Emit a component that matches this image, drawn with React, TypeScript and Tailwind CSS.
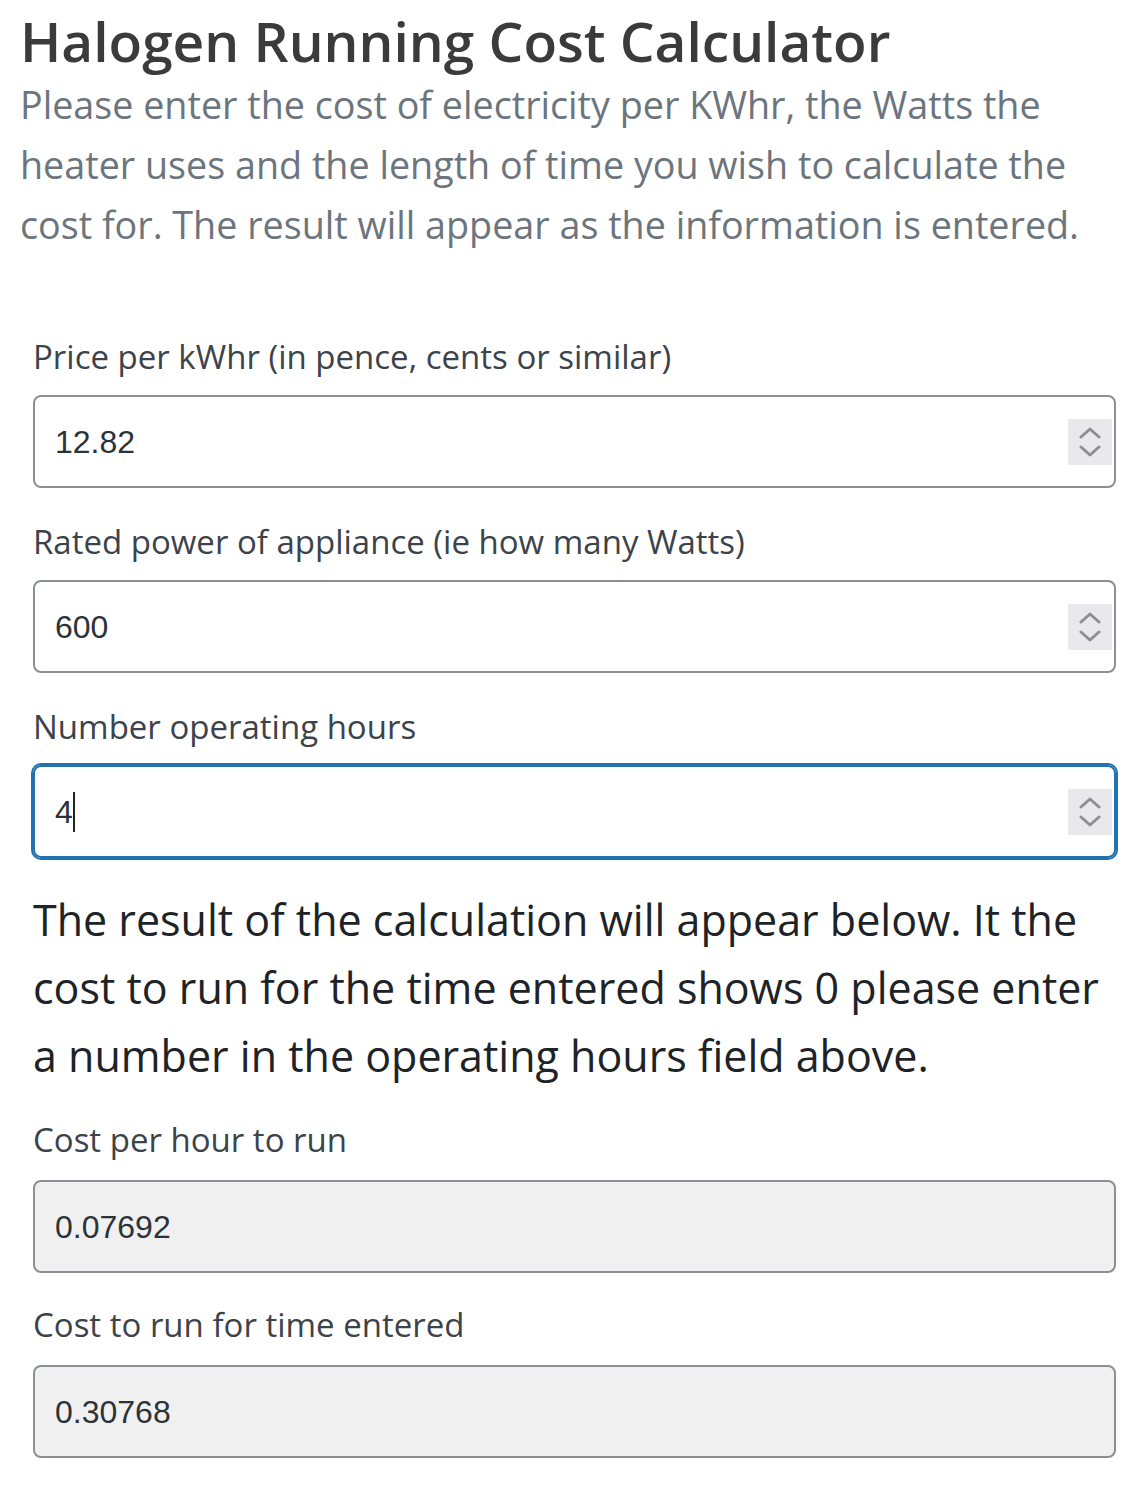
import { useState } from "react";

const fieldShell =
  "flex h-[93px] items-center rounded-[8px] border-2 border-[#8c8f94] pl-[20px] pr-[2px]";

const Spinner = () => (
  <div className="flex h-[46px] w-[44px] shrink-0 items-center justify-center bg-[#e9e9ed]">
    <svg width="22" height="32" viewBox="0 0 22 32" fill="none">
      <polyline
        points="2,11 11,3 20,11"
        stroke="#8e8e93"
        strokeWidth="3"
        strokeLinecap="round"
        strokeLinejoin="round"
      />
      <polyline
        points="2,21 11,29 20,21"
        stroke="#8e8e93"
        strokeWidth="3"
        strokeLinecap="round"
        strokeLinejoin="round"
      />
    </svg>
  </div>
);

const toNum = (v: string) => {
  const n = parseFloat(v);
  return isNaN(n) ? 0 : n;
};

const tidy = (n: number) => parseFloat(n.toFixed(6)).toString();

const App = () => {
  const [price, setPrice] = useState("12.82");
  const [watts, setWatts] = useState("600");
  const [hours, setHours] = useState("4");

  const perHour = (toNum(price) * toNum(watts)) / 100000;
  const total = perHour * toNum(hours);

  return (
    <div className="min-h-screen bg-white pl-[20px] pr-[18px] pt-[9px] font-['Open_Sans',sans-serif]">
      <h1 className="text-[55px] font-semibold leading-[64px] text-[#3b3b3b]">
        Halogen Running Cost Calculator
      </h1>
      <p className="mt-[2px] text-[37.7px] leading-[60px] text-[#6c757d]">
        Please enter the cost of electricity per KWhr, the Watts the heater uses
        and the length of time you wish to calculate the cost for. The result
        will appear as the information is entered.
      </p>

      <form className="mt-[82px] px-[13px]" onSubmit={(e) => e.preventDefault()}>
        <label className="block text-[33px] leading-[40px] text-[#3c434a]">
          Price per kWhr (in pence, cents or similar)
        </label>
        <div className={`mt-[18px] ${fieldShell}`}>
          <input
            type="text"
            inputMode="decimal"
            value={price}
            onChange={(e) => setPrice(e.target.value)}
            className="min-w-0 flex-1 bg-transparent font-['Liberation_Sans',sans-serif] text-[32px] text-[#2c3338] outline-none"
          />
          <Spinner />
        </div>

        <label className="mt-[34px] block text-[33px] leading-[40px] text-[#3c434a]">
          Rated power of appliance (ie how many Watts)
        </label>
        <div className={`mt-[18px] ${fieldShell}`}>
          <input
            type="text"
            inputMode="decimal"
            value={watts}
            onChange={(e) => setWatts(e.target.value)}
            className="min-w-0 flex-1 bg-transparent font-['Liberation_Sans',sans-serif] text-[32px] text-[#2c3338] outline-none"
          />
          <Spinner />
        </div>

        <label className="mt-[34px] block text-[33px] leading-[40px] text-[#3c434a]">
          Number operating hours
        </label>
        <div className="mt-[18px] flex h-[93px] items-center rounded-[8px] border-2 border-[#2271b1] pl-[20px] pr-[2px] shadow-[0_0_0_2px_#2271b1]">
          <div className="relative min-w-0 flex-1">
            <input
              type="text"
              inputMode="decimal"
              value={hours}
              onChange={(e) => setHours(e.target.value)}
              className="w-full bg-transparent font-['Liberation_Sans',sans-serif] text-[32px] text-[#2c3338] caret-transparent outline-none"
            />
            {/* caret drawn by hand so it shows in the still */}
            <div className="pointer-events-none absolute inset-0 flex items-center font-['Liberation_Sans',sans-serif] text-[32px]">
              <span className="invisible">{hours}</span>
              <span className="h-[40px] w-[2px] bg-[#1d2327]" />
            </div>
          </div>
          <Spinner />
        </div>

        <p className="mt-[28px] text-[43px] leading-[68px] text-[#1d2327]">
          The result of the calculation will appear below. It the cost to run
          for the time entered shows 0 please enter a number in the operating
          hours field above.
        </p>

        <label className="mt-[30px] block text-[33px] leading-[40px] text-[#3c434a]">
          Cost per hour to run
        </label>
        <div className="mt-[20px] flex h-[93px] items-center rounded-[8px] border-2 border-[#8c8f94] bg-[#f0f0f1] pl-[20px]">
          <input
            type="text"
            readOnly
            value={tidy(perHour)}
            className="min-w-0 flex-1 bg-transparent font-['Liberation_Sans',sans-serif] text-[32px] text-[#2c3338] outline-none"
          />
        </div>

        <label className="mt-[32px] block text-[33px] leading-[40px] text-[#3c434a]">
          Cost to run for time entered
        </label>
        <div className="mt-[20px] flex h-[93px] items-center rounded-[8px] border-2 border-[#8c8f94] bg-[#f0f0f1] pl-[20px]">
          <input
            type="text"
            readOnly
            value={tidy(total)}
            className="min-w-0 flex-1 bg-transparent font-['Liberation_Sans',sans-serif] text-[32px] text-[#2c3338] outline-none"
          />
        </div>
      </form>
    </div>
  );
};

export default App;
